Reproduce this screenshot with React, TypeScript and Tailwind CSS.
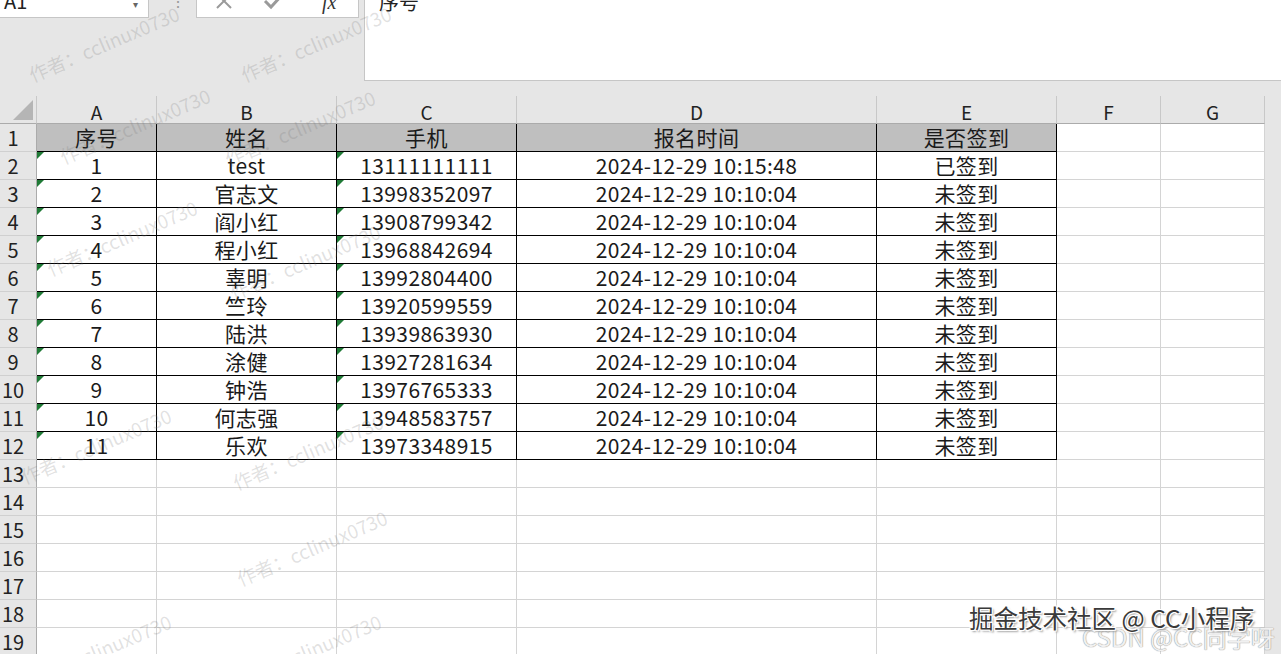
import React from "react";

const FONT = '"Noto Sans CJK SC", "Noto Sans", sans-serif';

const colW = [37, 120, 180, 180, 360, 180, 104, 104];
const letters = ["A", "B", "C", "D", "E", "F", "G", "H"];

const data: string[][] = [
  ["序号", "姓名", "手机", "报名时间", "是否签到"],
  ["1", "test", "13111111111", "2024-12-29 10:15:48", "已签到"],
  ["2", "官志文", "13998352097", "2024-12-29 10:10:04", "未签到"],
  ["3", "阎小红", "13908799342", "2024-12-29 10:10:04", "未签到"],
  ["4", "程小红", "13968842694", "2024-12-29 10:10:04", "未签到"],
  ["5", "辜明", "13992804400", "2024-12-29 10:10:04", "未签到"],
  ["6", "竺玲", "13920599559", "2024-12-29 10:10:04", "未签到"],
  ["7", "陆洪", "13939863930", "2024-12-29 10:10:04", "未签到"],
  ["8", "涂健", "13927281634", "2024-12-29 10:10:04", "未签到"],
  ["9", "钟浩", "13976765333", "2024-12-29 10:10:04", "未签到"],
  ["10", "何志强", "13948583757", "2024-12-29 10:10:04", "未签到"],
  ["11", "乐欢", "13973348915", "2024-12-29 10:10:04", "未签到"],
];

const watermarks: [number, number][] = [
  [104, 44],
  [316, 44],
  [135, 126],
  [300, 128],
  [122, 238],
  [305, 262],
  [96, 446],
  [308, 452],
  [312, 548],
  [96, 652],
  [306, 652],
];

function Triangle() {
  return (
    <span className="absolute left-0 top-0 w-0 h-0 border-t-[7px] border-r-[7px] border-t-[#1f7a36] border-r-transparent" />
  );
}

function Row({ r }: { r: number }) {
  const rowData = r <= 12 ? data[r - 1] : null;
  return (
    <div className="flex h-[28px]">
      <div className="w-[37px] shrink-0 h-[28px] bg-[#e6e6e6] border-r border-b border-r-[#ababab] border-b-[#d0d0d0] text-[20px] leading-[27px] text-[#222] text-center pr-[10px]">
        {r}
      </div>
      {colW.slice(1).map((w, ci) => {
        const inTable = rowData && ci < 5;
        const isHeader = r === 1 && ci < 5;
        const showTri = r >= 2 && r <= 12 && (ci === 0 || ci === 2);
        return (
          <div
            key={ci}
            style={{ width: ci === 7 ? undefined : w }}
            className={
              "relative h-[28px] border-r border-b text-[21px] tracking-[0.4px] leading-[27px] text-center text-[#1a1a1a] whitespace-nowrap " +
              (ci === 7 ? "flex-1 " : "shrink-0 ") +
              (inTable ? "border-black " : "border-[#d4d4d4] ") +
              (isHeader ? "bg-[#bfbfbf] " : "bg-white ")
            }
          >
            {showTri && <Triangle />}
            {inTable ? rowData![ci] : ""}
          </div>
        );
      })}
    </div>
  );
}

export default function App() {
  const rows = Array.from({ length: 19 }, (_, i) => i + 1);
  return (
    <div
      className="relative w-[1281px] h-[654px] overflow-hidden bg-[#e6e6e6]"
      style={{ fontFamily: FONT }}
    >
      {/* formula bar area */}
      <div className="flex h-[96px]">
        <div className="relative w-[149px] h-[18px] bg-white border-r border-b border-[#c6c6c6] shrink-0 overflow-hidden">
          <span className="absolute left-[4px] top-[-14px] text-[20px] text-[#222]">A1</span>
          <span className="absolute left-[133px] top-[-4px] text-[10px] text-[#666]">▾</span>
        </div>
        <div className="relative w-[47px] h-[18px] shrink-0 overflow-hidden">
          <span className="absolute left-[21px] top-[-8px] text-[16px] text-[#9a9a9a] leading-[16px]">⋮</span>
        </div>
        <div className="relative w-[163px] h-[18px] bg-white border-r border-b border-l border-[#c6c6c6] shrink-0 overflow-hidden">
          <svg className="absolute left-[17px] top-[-9px]" width="20" height="20" viewBox="0 0 20 20">
            <path d="M3 3 L17 17 M17 3 L3 17" stroke="#9a9a9a" strokeWidth="2" fill="none" />
          </svg>
          <svg className="absolute left-[66px] top-[-10px]" width="22" height="22" viewBox="0 0 22 22">
            <path d="M2 11 L8 17 L20 4" stroke="#9a9a9a" strokeWidth="3" fill="none" />
          </svg>
          <span className="absolute left-[125px] top-[-13px] text-[20px] italic text-[#333]" style={{ fontFamily: '"Liberation Serif", serif' }}>
            fx
          </span>
        </div>
        <div className="w-[5px] shrink-0" />
        <div className="relative flex-1 h-[81px] bg-white border-l border-b border-[#c6c6c6] overflow-hidden">
          <span className="absolute left-[14px] top-[-13px] text-[20px] text-[#222]">序号</span>
        </div>
      </div>

      {/* column header */}
      <div className="flex h-[28px]">
        <div className="relative w-[37px] shrink-0 h-[28px] border-r border-b border-r-[#c8c8c8] border-b-[#ababab]">
          <svg className="absolute left-[12px] top-[4px]" width="22" height="21" viewBox="0 0 22 21">
            <polygon points="21,0 21,20 1,20" fill="#b5b5b5" />
          </svg>
        </div>
        {colW.slice(1).map((w, ci) => (
          <div
            key={ci}
            style={{ width: ci === 7 ? undefined : w }}
            className={
              "h-[28px] border-r border-b border-r-[#c8c8c8] border-b-[#ababab] text-[19px] leading-[31px] text-center text-[#222] " +
              (ci === 7 ? "flex-1" : "shrink-0")
            }
          >
            {letters[ci]}
          </div>
        ))}
      </div>

      {rows.map((r) => (
        <Row key={r} r={r} />
      ))}

      {/* watermarks */}
      {watermarks.map(([x, y], i) => (
        <span
          key={i}
          className="absolute whitespace-nowrap text-[19px] text-[rgba(120,120,120,0.22)] pointer-events-none"
          style={{ left: x, top: y, transform: "translate(-50%, -50%) rotate(-23deg)" }}
        >
          作者：cclinux0730
        </span>
      ))}

      <span
        className="absolute left-[1082px] top-[619px] whitespace-nowrap text-[24px] text-[#f0f0f0] pointer-events-none"
        style={{ textShadow: "0 0 1px #999, 0 0 1px #999" }}
      >
        CSDN @CC同学呀
      </span>
      <span
        className="absolute left-[969px] top-[600px] whitespace-nowrap text-[24.5px] text-[#3a3a3a] pointer-events-none"
        style={{ textShadow: "1px 1px 0 #fff, -1px -1px 0 #fff, 1px -1px 0 #fff, -1px 1px 0 #fff, 2px 2px 2px #999" }}
      >
        掘金技术社区 @ CC小程序
      </span>
    </div>
  );
}
